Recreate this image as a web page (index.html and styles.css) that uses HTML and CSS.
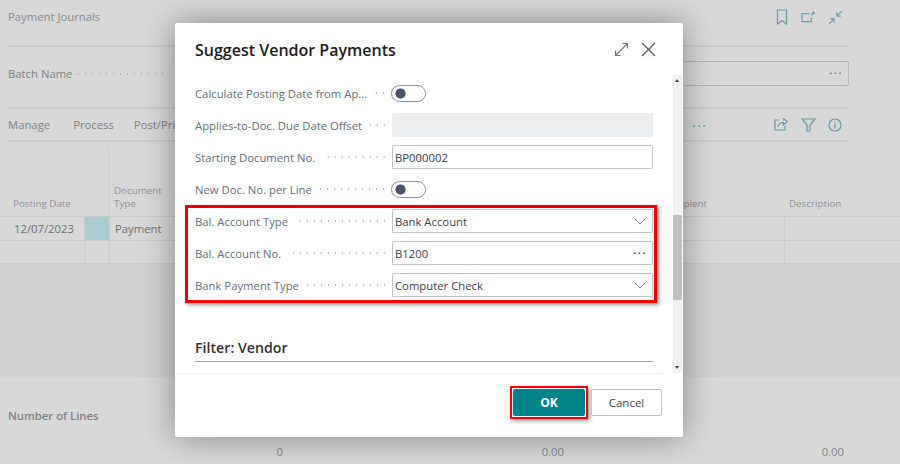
FILE: index.html

```html
<!DOCTYPE html>
<html lang="en">
<head>
  <meta charset="UTF-8">
  <title>Suggest Vendor Payments</title>
  <link rel="stylesheet" href="styles.css">
</head>
<body>

<div class="page">
  <header class="top">
    <span class="top-title">Payment Journals</span>
    <div class="icons">
      <svg width="12" height="16" viewBox="0 0 12 16"><path d="M1.500 1h9v14L6 11.500 1.500 15z"/></svg>
      <svg width="14" height="12" viewBox="0 0 15 12"><path d="M9 2.500H1v8.500h10V6.500"/><path d="M11 4l3-3M12 1h2v2" /></svg>
      <svg width="15" height="15" viewBox="0 0 16 16"><path d="M1 15l5.500-5.500M2.500 9.500h4v4M15 1L9.500 6.500M9.500 2.500v4h4"/></svg>
    </div>
  </header>

  <section class="batch">
    <span class="batch-label">Batch Name</span>
    <span class="leader"></span>
    <div class="batch-field">&middot;&middot;&middot;</div>
  </section>

  <nav class="actions">
    <a>Manage</a>
    <a>Process</a>
    <a>Post/Print</a>
    <span class="actions-more">&middot;&middot;&middot;</span>
    <div class="icons">
      <svg width="14" height="13" viewBox="0 0 14 13"><path d="M5 2H1v10h10V8"/><path d="M4 9c0-3 2.500-4.500 5.500-4.500V7L13.500 3.500 9.500 0.500V2.500"/></svg>
      <svg width="15" height="14" viewBox="0 0 15 14"><path d="M1 1h13L9 7v6H6V7z"/></svg>
      <svg width="14" height="14" viewBox="0 0 14 14"><circle cx="7" cy="7" r="6"/><path d="M7 6v4.500M7 3.500v1.200"/></svg>
    </div>
  </nav>

  <div class="grid-head">
    <span class="col-date">Posting Date</span>
    <span class="col-type">Document<br>Type</span>
    <span class="col-recipient">Recipient</span>
    <span class="col-desc">Description</span>
  </div>
  <div class="grid-row">
    <span class="cell-date">12/07/2023</span>
    <span class="cell-mark cell-teal"></span>
    <span class="cell-type">Payment</span>
    <span class="cell-wide"></span>
    <span class="cell-last"></span>
  </div>
  <div class="grid-row">
    <span class="cell-date"></span>
    <span class="cell-mark"></span>
    <span class="cell-type"></span>
    <span class="cell-wide"></span>
    <span class="cell-last"></span>
  </div>
  <div class="grid-empty"></div>

  <div class="summary">Number of Lines</div>
  <div class="totals">
    <span>0</span>
    <span>0.00</span>
    <span>0.00</span>
  </div>
</div>

<div class="dialog">
  <div class="dialog-head">
    <h2>Suggest Vendor Payments</h2>
    <svg class="dlg-expand" width="15" height="15" viewBox="0 0 15 15"><path d="M1.500 13.500l12-12M8.500 1.500h5v5M1.500 8.500v5h5"/></svg>
    <svg class="dlg-close" width="15" height="15" viewBox="0 0 15 15"><path d="M1 1l13 13M14 1L1 14"/></svg>
  </div>

  <div class="dialog-body">
    <div class="form">
      <div class="row">
        <label>Calculate Posting Date from Ap...</label><span class="leader"></span>
        <span class="toggle"><i></i></span>
      </div>
      <div class="row">
        <label>Applies-to-Doc. Due Date Offset</label><span class="leader"></span>
        <div class="field field-off"></div>
      </div>
      <div class="row">
        <label>Starting Document No.</label><span class="leader"></span>
        <div class="field">BP000002</div>
      </div>
      <div class="row">
        <label>New Doc. No. per Line</label><span class="leader"></span>
        <span class="toggle"><i></i></span>
      </div>

      <div class="marked">
        <div class="row">
          <label>Bal. Account Type</label><span class="leader"></span>
          <div class="field">Bank Account
            <svg class="chev" width="12" height="7" viewBox="0 0 12 7"><path d="M1 1l5 5 5-5"/></svg>
          </div>
        </div>
        <div class="row">
          <label>Bal. Account No.</label><span class="leader"></span>
          <div class="field">B1200<span class="dots">&middot;&middot;&middot;</span></div>
        </div>
        <div class="row">
          <label>Bank Payment Type</label><span class="leader"></span>
          <div class="field">Computer Check
            <svg class="chev" width="12" height="7" viewBox="0 0 12 7"><path d="M1 1l5 5 5-5"/></svg>
          </div>
        </div>
      </div>

      <h3>Filter: Vendor</h3>
    </div>
    <div class="scrollbar">
      <span class="arrow-up"></span>
      <span class="thumb"></span>
      <span class="arrow-down"></span>
    </div>
  </div>

  <div class="dialog-foot">
    <div class="ok-mark"><button class="btn-ok">OK</button></div>
    <button class="btn-cancel">Cancel</button>
  </div>
</div>

</body>
</html>
```

FILE: styles.css

```css
* {
  box-sizing: border-box;
}
body {
  margin: 0;
  width: 900px;
  height: 464px;
  overflow: hidden;
  position: relative;
  background-color: #d8d8d8;
  font-family: 'Open Sans', 'Noto Sans', sans-serif;
  font-size: 11.300px;
  color: #6f7479;
}
.page {
  height: 464px;
  overflow: hidden;
}
.icons {
  display: flex;
  align-items: center;
  margin-left: auto;
}
.icons svg {
  fill: none;
  stroke: #5f9ea3;
  stroke-width: 1.200;
}

/* background page */
.top {
  height: 47px;
  margin: 0 51px 0 8px;
  padding-top: 9px;
  display: flex;
  align-items: flex-start;
  border-bottom: 2px solid #cbcbcb;
}
.top .icons {
  gap: 13px;
  padding-right: 6px;
}
.top-title {
  color: #858a8f;
}
.batch {
  height: 62px;
  margin: 0 51px 0 8px;
  padding-top: 14px;
  display: flex;
  align-items: flex-start;
  border-bottom: 2px solid #cbcbcb;
}
.batch-label {
  color: #7d8287;
  line-height: 25px;
}
.batch .leader {
  flex: 0 0 90px;
  margin: 12px 0 0 4px;
}
.batch-field {
  flex: 1;
  height: 25px;
  margin-left: 72px;
  padding-right: 5px;
  text-align: right;
  line-height: 22px;
  letter-spacing: 1.500px;
  font-weight: 600;
  border: 1px solid #b5b5b5;
  border-radius: 2px;
}
.actions {
  height: 33px;
  margin: 0 51px 0 8px;
  display: flex;
  align-items: center;
  border-bottom: 2px solid #cbcbcb;
  color: #7d8287;
}
.actions a {
  margin-right: 23px;
}
.actions a:nth-child(2) {
  margin-right: 20px;
}
.actions-more {
  position: absolute;
  left: 692px;
  top: 116px;
  color: #5f9ea3;
  font-size: 14px;
  letter-spacing: 1.500px;
}
.actions .icons {
  gap: 12px;
  padding-right: 7px;
}
.actions .icons svg:first-child {
  margin-right: 1px;
}

.grid-head {
  height: 75px;
  display: grid;
  grid-template-columns: 109px 100px 498px 1fr;
  border-bottom: 1px solid #cbcbcb;
  font-size: 9.800px;
  color: #8f9499;
  align-items: end;
  padding-bottom: 6px;
}
.col-date {
  padding-left: 13px;
  position: relative;
}
.col-date::after {
  content: "";
  position: absolute;
  top: -48px;
  bottom: -7px;
  right: 0;
  border-right: 1px solid #cbcbcb;
}
.col-type {
  padding-left: 5px;
  line-height: 13px;
}
.col-recipient {
  text-align: right;
}
.col-desc {
  padding-left: 82px;
}
.grid-row {
  height: 23.500px;
  display: flex;
  border-bottom: 1px solid #cbcbcb;
  line-height: 23px;
  color: #6a6f74;
}
.grid-row span {
  border-right: 1px solid #cbcbcb;
}
.cell-date {
  width: 85px;
  padding-left: 14px;
}
.cell-mark {
  width: 25px;
}
.cell-teal {
  background-color: #a9cdd0;
}
.cell-type {
  width: 100px;
  padding-left: 5px;
}
.cell-wide {
  width: 575px;
}
.cell-last {
  flex: 1;
  border-right: none !important;
}
.grid-empty {
  height: 113px;
  background-color: #d1d1d1;
}
.summary {
  padding: 31px 0 0 8px;
  height: 67px;
  color: #7d8287;
  font-weight: 600;
}
.totals {
  display: grid;
  grid-template-columns: 283px 281px 280px;
  text-align: right;
  color: #82878c;
}

/* dialog */
.dialog {
  position: absolute;
  left: 175px;
  top: 23px;
  width: 508px;
  height: 414px;
  background-color: #fff;
  border-radius: 2px;
  box-shadow: 0 0 32px rgba(0, 0, 0, 0.38);
  color: #66707a;
}
.dialog-head {
  height: 52px;
  padding: 15px 27px 0 20px;
  display: flex;
  align-items: flex-start;
}
.dialog-head h2 {
  margin: 0;
  font-size: 16px;
  font-weight: 600;
  color: #212121;
  line-height: 24px;
}
.dialog-head svg {
  fill: none;
  stroke-width: 1.200;
  margin-top: 4px;
}
.dlg-expand {
  margin-left: auto;
  stroke: #777;
}
.dlg-close {
  margin-left: 12px;
  stroke: #555;
}
.dialog-body {
  height: 299px;
  display: flex;
}
.form {
  width: 487px;
  margin-right: 20px;
  padding: 6px 0 0 20px;
  overflow: hidden;
  border-bottom: 1px solid #ececec;
}
.row {
  display: flex;
  align-items: center;
  height: 24px;
  margin-bottom: 8px;
  width: 458px;
}
.row label {
  white-space: nowrap;
}
.leader {
  flex: 1;
  height: 2px;
  margin: 0 4px 0 8px;
  background-image: radial-gradient(circle, #b5b5b5 0.700px, transparent 0.900px);
  background-size: 7px 2px;
  background-position: right;
}
.field {
  flex: 0 0 261px;
  height: 24px;
  padding-left: 2px;
  border: 1px solid #c3c6cb;
  border-radius: 1px;
  line-height: 23px;
  color: #3d4247;
  position: relative;
}
.field-off {
  background-color: #ebedef;
  border-color: #ebedef;
}
.chev {
  position: absolute;
  right: 6px;
  top: 8px;
  fill: none;
  stroke: #6f7479;
  stroke-width: 1;
}
.dots {
  position: absolute;
  right: 5px;
  top: -1px;
  font-weight: 600;
  letter-spacing: 1.500px;
}
.toggle {
  flex: 0 0 262px;
  height: 17px;
  display: flex;
}
.toggle i {
  display: block;
  width: 35px;
  height: 17px;
  border: 1px solid #8b919a;
  border-radius: 9px;
  background: radial-gradient(circle at 8.500px 7.500px, #47536b 4.800px, transparent 5.300px);
}
.marked {
  width: 472px;
  height: 98px;
  margin: -4px 0 0 -10px;
  padding: 1px 0 0 7px;
  border: 3px solid #f00000;
  box-shadow: 2px 2px 4px rgba(0, 0, 0, 0.4);
  position: relative;
}
.marked .row:last-child {
  margin-bottom: 0;
}
.form h3 {
  width: 458px;
  margin: 34px 0 0;
  padding-bottom: 2px;
  font-size: 14.200px;
  line-height: 22px;
  font-weight: 600;
  color: #333;
  border-bottom: 1px solid #a3a3a3;
}
.scrollbar {
  position: absolute;
  left: 498px;
  top: 52px;
  width: 9px;
  height: 298px;
  background-color: #f1f1f1;
}
.thumb {
  position: absolute;
  left: 0;
  top: 140px;
  width: 9px;
  height: 85px;
  background-color: #c1c1c1;
}
.arrow-up, .arrow-down {
  position: absolute;
  left: 2px;
  width: 0;
  height: 0;
  border-left: 2.500px solid transparent;
  border-right: 2.500px solid transparent;
}
.arrow-up {
  top: 4px;
  border-bottom: 3px solid #444;
}
.arrow-down {
  bottom: 4px;
  border-top: 3px solid #444;
}
.dialog-foot {
  padding: 12px 21px 0 0;
  display: flex;
  justify-content: flex-end;
  align-items: flex-start;
}
.ok-mark {
  padding: 1px;
  border: 2px solid #f00000;
  box-shadow: 2px 2px 4px rgba(0, 0, 0, 0.4);
  margin-right: 3px;
}
button {
  display: block;
  height: 27px;
  font-family: inherit;
  font-size: 12px;
  border-radius: 2px;
}
.btn-ok {
  width: 72px;
  background-color: #00848a;
  color: #fff;
  font-weight: 700;
  border: none;
}
.btn-cancel {
  width: 71px;
  margin-top: 3px;
  background-color: #fff;
  color: #444;
  border: 1px solid #c2c2c2;
  font-size: 11.500px;
  font-weight: 500;
}
```
